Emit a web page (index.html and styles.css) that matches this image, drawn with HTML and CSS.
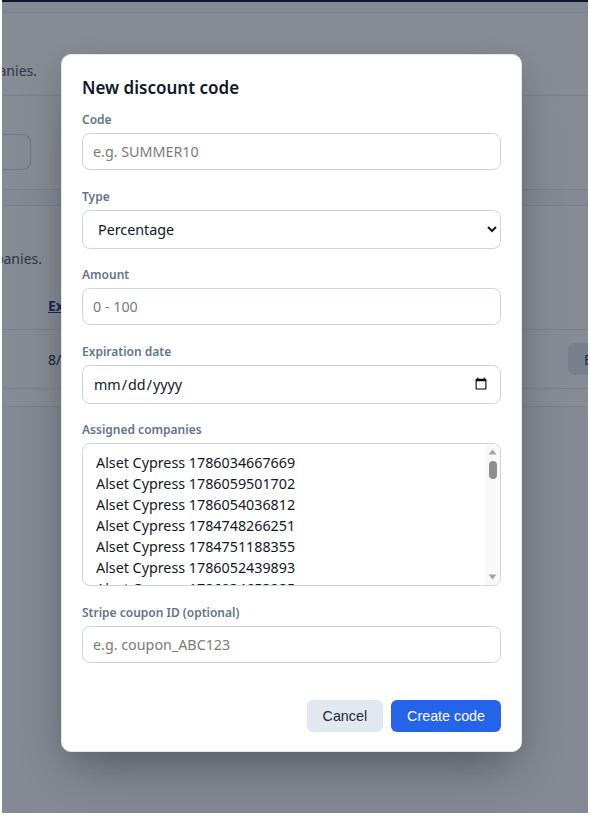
FILE: index.html
```html
<!DOCTYPE html>
<html lang="en">
<head>
<meta charset="utf-8">
<title>Discount codes</title>
<link rel="stylesheet" href="styles.css">
</head>
<body>
<div class="screen">
  <div class="page">
    <header class="topbar"></header>
    <main class="main">
      <section class="card">
        <div class="card-head">
          <p class="desc"><span>Create discount codes and assign them to companies.</span></p>
        </div>
        <div class="card-body">
          <div class="search-box"></div>
        </div>
      </section>
      <section class="card card-list">
        <div class="card-head card-head-list">
          <p class="desc desc-wide"><span>Codes currently available to companies.</span></p>
        </div>
        <div class="table">
          <div class="trow thead">
            <a class="cell cell-exp sort-link" href="#">Expires</a>
          </div>
          <div class="trow">
            <span class="cell cell-exp">8/31/2026</span>
            <button type="button" class="row-btn">Edit</button>
          </div>
        </div>
      </section>
    </main>
  </div>

  <div class="overlay">
    <form class="modal">
      <h2 class="modal-title">New discount code</h2>
      <div class="fields">
        <label class="field">
          <span class="field-label">Code</span>
          <input class="control" type="text" placeholder="e.g. SUMMER10">
        </label>
        <label class="field">
          <span class="field-label">Type</span>
          <select class="control control-tall">
            <option>Percentage</option>
            <option>Fixed amount</option>
          </select>
        </label>
        <label class="field">
          <span class="field-label">Amount</span>
          <input class="control" type="number" placeholder="0 - 100">
        </label>
        <label class="field">
          <span class="field-label">Expiration date</span>
          <input class="control control-tall" type="date">
        </label>
        <div class="field">
          <span class="field-label">Assigned companies</span>
          <div class="listbox" role="listbox" aria-multiselectable="true">
            <ul class="listbox-items">
              <li>Alset Cypress 1786034667669</li>
              <li>Alset Cypress 1786059501702</li>
              <li>Alset Cypress 1786054036812</li>
              <li>Alset Cypress 1784748266251</li>
              <li>Alset Cypress 1784751188355</li>
              <li>Alset Cypress 1786052439893</li>
              <li>Alset Cypress 1786034653285</li>
            </ul>
            <div class="scrollbar" aria-hidden="true">
              <span class="sb-arrow"><svg width="9" height="6" viewBox="0 0 9 6"><path d="M4.5 0.5 L8.5 5.5 H0.5 Z" fill="#a3a3a3"/></svg></span>
              <span class="sb-thumb"></span>
              <span class="sb-track"></span>
              <span class="sb-arrow"><svg width="9" height="6" viewBox="0 0 9 6"><path d="M0.5 0.5 H8.5 L4.5 5.5 Z" fill="#a3a3a3"/></svg></span>
            </div>
          </div>
        </div>
        <label class="field">
          <span class="field-label">Stripe coupon ID (optional)</span>
          <input class="control" type="text" placeholder="e.g. coupon_ABC123">
        </label>
      </div>
      <div class="actions">
        <button type="button" class="btn btn-secondary">Cancel</button>
        <button type="submit" class="btn btn-primary">Create code</button>
      </div>
    </form>
  </div>
</div>
</body>
</html>
```

FILE: styles.css
```css
html, body {
  margin: 0;
  padding: 0;
}

body {
  background: #ffffff;
  font-family: "Noto Sans", "Open Sans", sans-serif;
  color: #0f172a;
}

/* viewport frame */
.screen {
  position: relative;
  height: 813px;
  margin: 0 2px;
  overflow: hidden;
  background: #f8fafc;
}

/* ---------- page behind the dialog ---------- */
.topbar {
  height: 2px;
  background: #0f172a;
}

.main {
  display: flex;
  flex-direction: column;
  gap: 15px;
  padding-top: 10px;
}

.card {
  background: #ffffff;
  border-top: 1px solid #e2e8f0;
  border-bottom: 1px solid #e2e8f0;
}

.card-head {
  height: 82px;
  display: flex;
  align-items: flex-end;
  border-bottom: 1px solid #e2e8f0;
}

.desc {
  margin: 0 0 14px;
  width: 35px;
  display: flex;
  justify-content: flex-end;
  overflow: hidden;
  white-space: nowrap;
  font-size: 14px;
  line-height: 20px;
  color: #475569;
}

.desc-wide {
  width: 40px;
}

.card-body {
  padding: 38px 0 19px;
}

.search-box {
  width: 29px;
  height: 36px;
  box-sizing: border-box;
  border: 1px solid #cbd5e1;
  border-left: none;
  border-radius: 0 8px 8px 0;
}

.card-head-list {
  height: 77px;
  border-bottom: none;
}

.table {
  display: flex;
  flex-direction: column;
  padding-top: 5px;
  padding-bottom: 17px;
}

.trow {
  box-sizing: border-box;
  display: flex;
  align-items: center;
  height: 59px;
  border-bottom: 1px solid #e2e8f0;
  font-size: 14px;
  color: #1e293b;
}

.thead {
  height: 42px;
  align-items: flex-start;
  padding-top: 8px;
}

.cell-exp {
  margin-left: 46px;
  white-space: nowrap;
}

.sort-link {
  font-weight: 700;
  color: #1e3a8a;
  text-decoration: underline;
}

.row-btn {
  margin-left: auto;
  margin-right: -37px;
  height: 32px;
  padding: 0 16px;
  border: none;
  border-radius: 6px;
  background: #e2e8f0;
  color: #1e3a8a;
  font: 14px "Noto Sans", sans-serif;
}

/* ---------- dialog ---------- */
.overlay {
  position: absolute;
  inset: 0;
  display: flex;
  align-items: flex-start;
  padding: 54px 0 0 59px;
  background: rgba(15, 23, 42, 0.5);
}

.modal {
  width: 461px;
  box-sizing: border-box;
  margin: 0;
  padding: 21px 20px 19px;
  background: #ffffff;
  border: 1px solid #e2e8f0;
  border-radius: 10px;
  box-shadow: 0 25px 50px -12px rgba(0, 0, 0, 0.3), 0 8px 24px rgba(0, 0, 0, 0.08);
}

.modal-title {
  margin: 0 0 11px;
  font-size: 17px;
  line-height: 24px;
  font-weight: 600;
  color: #111827;
}

.fields {
  display: flex;
  flex-direction: column;
  gap: 17.5px;
}

.field {
  display: flex;
  flex-direction: column;
  gap: 4px;
}

.field-label {
  font-size: 12px;
  line-height: 18px;
  font-weight: 600;
  color: #64748b;
}

.control {
  box-sizing: border-box;
  width: 100%;
  height: 37px;
  margin: 0;
  padding: 0 10px;
  border: 1px solid #cbd5e1;
  border-radius: 8px;
  background: #ffffff;
  font-family: "Noto Sans", "Open Sans", sans-serif;
  font-size: 14.3px;
  color: #111827;
  outline: none;
}

.control::placeholder {
  color: #7b7b7b;
}

.control[type="number"] {
  appearance: textfield;
}

.control-tall {
  height: 39px;
}

select.control {
  padding-left: 11px;
}

/* multi-select company list */
.listbox {
  display: flex;
  height: 143px;
  box-sizing: border-box;
  border: 1px solid #cbd5e1;
  border-radius: 8px;
  overflow: hidden;
  background: #ffffff;
}

.listbox-items {
  flex: 1;
  margin: 0;
  padding: 8px 0 0 11px;
  list-style: none;
  overflow: hidden;
  font-size: 14.3px;
  line-height: 21px;
  color: #111827;
}

.listbox-items li {
  padding: 0 2px;
  white-space: nowrap;
}

.scrollbar {
  width: 15px;
  display: flex;
  flex-direction: column;
  align-items: center;
  background: #f9f9f9;
}

.sb-arrow {
  height: 16px;
  display: flex;
  align-items: center;
  justify-content: center;
}

.sb-thumb {
  width: 8px;
  height: 18px;
  margin-top: 1px;
  border-radius: 4px;
  background: #8f8f8f;
}

.sb-track {
  flex: 1;
}

/* footer buttons */
.actions {
  display: flex;
  justify-content: flex-end;
  gap: 8px;
  margin-top: 37px;
}

.btn {
  height: 32px;
  padding: 0 16px;
  border: none;
  border-radius: 6px;
  font-family: "Liberation Sans", Arial, sans-serif;
  font-size: 14.3px;
  cursor: pointer;
}

.btn-secondary {
  background: #e2e8f0;
  color: #1e293b;
}

.btn-primary {
  background: #2563eb;
  color: #ffffff;
}
```
